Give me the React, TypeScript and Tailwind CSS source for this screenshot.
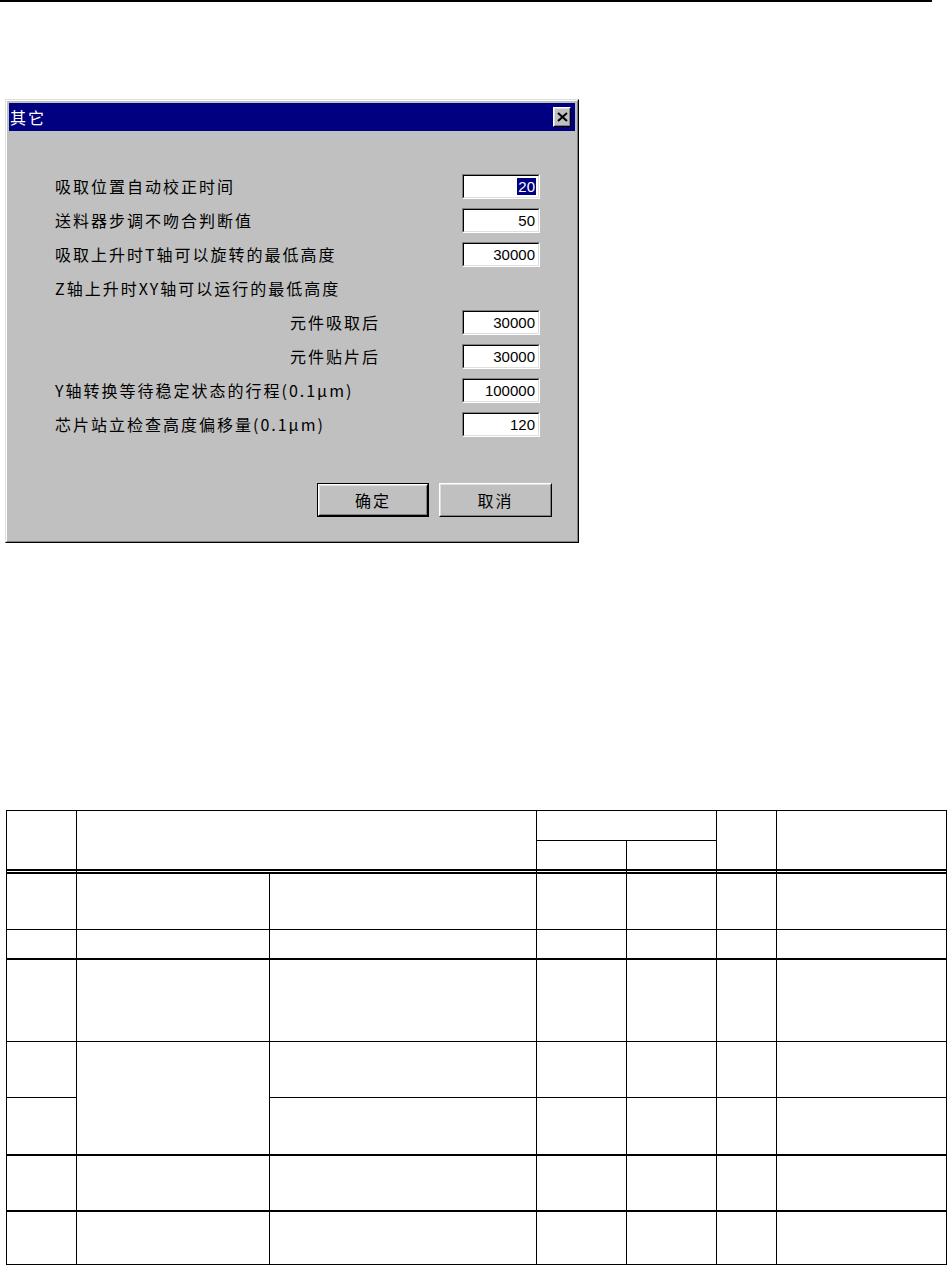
import React from "react";

type Field = {
  label: string;
  value?: string;
  selected?: boolean;
  indent?: boolean;
};

const fields: Field[] = [
  { label: "吸取位置自动校正时间", value: "20", selected: true },
  { label: "送料器步调不吻合判断值", value: "50" },
  { label: "吸取上升时T轴可以旋转的最低高度", value: "30000" },
  { label: "Z轴上升时XY轴可以运行的最低高度" },
  { label: "元件吸取后", value: "30000", indent: true },
  { label: "元件贴片后", value: "30000", indent: true },
  { label: "Y轴转换等待稳定状态的行程(0.1μm)", value: "100000" },
  { label: "芯片站立检查高度偏移量(0.1μm)", value: "120" },
];

const cjk = "font-['Noto_Sans_CJK_SC','Noto_Sans',sans-serif]";

function NumberBox({ value, selected }: { value: string; selected?: boolean }) {
  return (
    <div className="w-[78px] h-[25px] border border-t-[#808080] border-l-[#808080] border-r-white border-b-white">
      <div className="h-full border border-t-black border-l-black border-r-[#dfdfdf] border-b-[#dfdfdf] bg-white flex items-center justify-end pr-[2px]">
        <span
          className={
            "font-['Liberation_Sans',Arial,sans-serif] text-[15px] leading-[17px] px-[1px] " +
            (selected ? "bg-[#000080] text-white" : "text-black")
          }
        >
          {value}
        </span>
      </div>
    </div>
  );
}

function WinButton({ label, isDefault }: { label: string; isDefault?: boolean }) {
  const inner = (
    <div className="h-full border border-t-white border-l-white border-r-black border-b-black">
      <div className="h-full border border-t-[#dfdfdf] border-l-[#dfdfdf] border-r-[#808080] border-b-[#808080] flex items-center justify-center">
        <span className={cjk + " text-[16px] tracking-[2px] text-black"}>{label}</span>
      </div>
    </div>
  );
  if (isDefault) {
    return <div className="w-[112px] h-[34px] border border-black">{inner}</div>;
  }
  return <div className="w-[113px] h-[34px]">{inner}</div>;
}

function CloseButton() {
  return (
    <div className="w-[18px] h-[20px] bg-[#c0c0c0] border border-t-white border-l-white border-r-black border-b-black">
      <div className="h-full border border-t-[#dfdfdf] border-l-[#dfdfdf] border-r-[#808080] border-b-[#808080] flex items-center justify-center">
        <svg width="11" height="10" viewBox="0 0 11 10">
          <path d="M1 1 L10 9 M10 1 L1 9" stroke="black" strokeWidth="2" />
        </svg>
      </div>
    </div>
  );
}

function Dialog() {
  return (
    <div className="w-[574px] h-[444px] bg-[#c0c0c0] border border-t-[#dfdfdf] border-l-[#dfdfdf] border-r-black border-b-black">
      <div className="h-full border border-t-white border-l-white border-r-[#808080] border-b-[#808080] p-[2px] flex flex-col">
        <div className="h-[28px] bg-[#000080] flex items-center justify-between pl-[1px] pr-[4px]">
          <span className={cjk + " text-[16px] tracking-[2px] text-white"}>其它</span>
          <CloseButton />
        </div>
        <div className="flex-1 flex flex-col pt-[38px] pl-[46px] pr-[35px]">
          {fields.map((f) => (
            <div key={f.label} className="h-[34px] flex items-center justify-between">
              <span
                className={
                  cjk + " text-[16px] tracking-[2px] text-black whitespace-nowrap " + (f.indent ? "ml-[235px]" : "")
                }
              >
                {f.label}
              </span>
              {f.value && <NumberBox value={f.value} selected={f.selected} />}
            </div>
          ))}
          <div className="mt-[42px] flex justify-end gap-[10px] mr-[-12px]">
            <WinButton label="确定" isDefault />
            <WinButton label="取消" />
          </div>
        </div>
      </div>
    </div>
  );
}

const cell = "border-r border-b border-black";
const dbl = "border-r border-b-[5px] border-double border-black";
const thick = "border-r border-b-2 border-black";

function SpecTable() {
  return (
    <div className="ml-[6px] w-[941px] border-l border-t border-black grid grid-cols-[70px_193px_267px_90px_90px_60px_170px] grid-rows-[30px_33px_56px_30px_82px_56px_58px_56px_53px]">
      {/* header */}
      <div className={dbl + " row-span-2"} />
      <div className={dbl + " row-span-2 col-span-2"} />
      <div className={cell + " col-span-2"} />
      <div className={dbl + " row-span-2"} />
      <div className={dbl + " row-span-2"} />
      <div className={dbl} />
      <div className={dbl} />

      {/* row A */}
      {[0, 1, 2, 3, 4, 5, 6].map((i) => (
        <div key={"a" + i} className={cell} />
      ))}
      {/* row B */}
      {[0, 1, 2, 3, 4, 5, 6].map((i) => (
        <div key={"b" + i} className={thick} />
      ))}
      {/* row C */}
      {[0, 1, 2, 3, 4, 5, 6].map((i) => (
        <div key={"c" + i} className={cell} />
      ))}
      {/* row D, second column runs into row E */}
      <div className={cell} />
      <div className={thick + " row-span-2"} />
      {[0, 1, 2, 3, 4].map((i) => (
        <div key={"d" + i} className={cell} />
      ))}
      {/* row E */}
      <div className={thick} />
      {[0, 1, 2, 3, 4].map((i) => (
        <div key={"e" + i} className={thick} />
      ))}
      {/* row F */}
      {[0, 1, 2, 3, 4, 5, 6].map((i) => (
        <div key={"f" + i} className={thick} />
      ))}
      {/* row G */}
      {[0, 1, 2, 3, 4, 5, 6].map((i) => (
        <div key={"g" + i} className={cell} />
      ))}
    </div>
  );
}

export default function App() {
  return (
    <div className="w-[948px] h-[1265px] bg-white overflow-hidden">
      <div className="h-[2px] w-[932px] bg-black" />
      <div className="mt-[97px] ml-[5px]">
        <Dialog />
      </div>
      <div className="mt-[267px]">
        <SpecTable />
      </div>
    </div>
  );
}
